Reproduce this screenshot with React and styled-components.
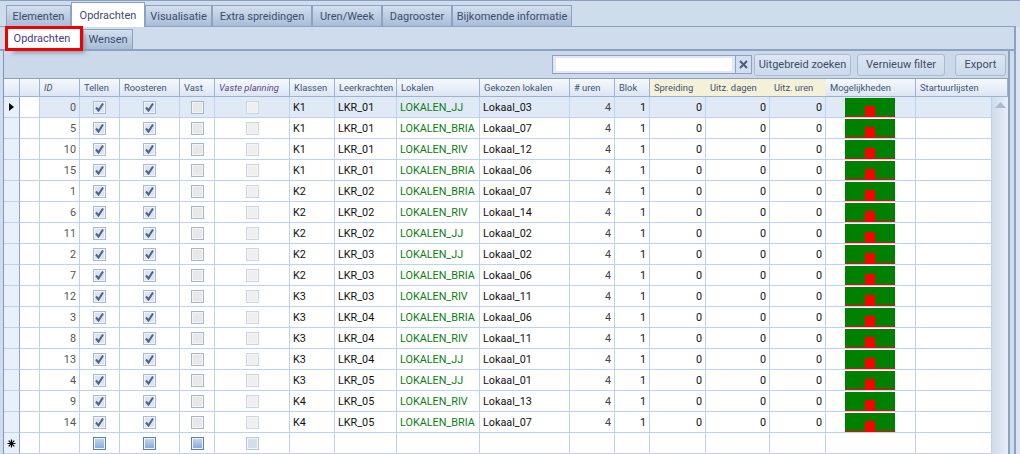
import React from "react";
import styled, { createGlobalStyle } from "styled-components";

const BODY_COLS = "16px 20px 40px 40px 60px 35px 75px 45px 62px 83px 90px 45px 35px 56px 64px 56px 90px 76px";
const HEAD_COLS = "16px 20px 40px 40px 60px 35px 75px 45px 62px 83px 90px 45px 35px 56px 64px 56px 90px 92px";

const GlobalStyle = createGlobalStyle`
  html, body { margin: 0; padding: 0; background: #cfdcec; }
  body { font-family: Roboto, "Liberation Sans", Arial, sans-serif; font-size: 11px; }
`;

const Page = styled.div`
  width: 1020px;
  height: 454px;
  overflow: hidden;
  background: #cfdcec;
  border-top: 1px solid #8aa0c0;
  box-sizing: border-box;
  display: flex;
  flex-direction: column;
`;

const MainTabs = styled.div`
  display: flex;
  align-items: flex-end;
  height: 25px;
  padding-left: 6px;
  flex: none;
  border-bottom: 1px solid #8ba2c4;
  margin-right: 4px;
`;

const MainTab = styled.div`
  box-sizing: border-box;
  width: ${(p) => p.$w}px;
  height: ${(p) => (p.$active ? 25 : 21)}px;
  display: flex;
  align-items: center;
  justify-content: center;
  color: #3d4d6e;
  font-size: 11px;
  border: 1px solid #8ba2c4;
  border-bottom: none;
  background: ${(p) => (p.$active ? "#fff" : "linear-gradient(#d3dfee, #a8bdd8)")};
  ${(p) => p.$active && "margin-bottom: -1px;"}
`;

const TabPanel = styled.div`
  flex: 1;
  min-height: 0;
  display: flex;
  flex-direction: column;
  margin-right: 4px;
  border-right: 2px solid #8ba2c4;
  background: #cfdcec;
  box-shadow: 4px 0 0 #dbe5f2;
`;

const SubTabs = styled.div`
  display: flex;
  align-items: flex-end;
  height: 22px;
  padding-left: ${(p) => p.$inset}px;
  flex: none;
  border-bottom: 2px solid #8ba2c4;
`;

const SubTab = styled.div`
  box-sizing: border-box;
  height: 20px;
  width: ${(p) => p.$w}px;
  display: flex;
  align-items: center;
  justify-content: center;
  font-size: 11px;
  color: #3d4d6e;
  background: linear-gradient(#d3dfee, #a8bdd8);
  border: 1px solid #8ba2c4;
  border-bottom: none;
  ${(p) =>
    p.$marked &&
    `height: 19px;
     margin-bottom: 1px;
     padding-right: 4px;
     background: #fff;
     outline: 3px solid #f00000;
     box-shadow: 5px 5px 4px #8a9ab0;
     position: relative;
     z-index: 2;
     margin-right: 3px;
     border: none;
     color: #4a3a86;`}
`;

const GridFrame = styled.div`
  flex: 1;
  min-height: 0;
  margin-left: 3px;
  margin-right: 4px;
  display: flex;
  flex-direction: column;
  border-left: 1px solid #7f97bb;
  border-right: 2px solid #8ba2c4;
`;

const Toolbar = styled.div`
  flex: none;
  height: 27px;
  display: flex;
  align-items: center;
  background: #ccd9ea;
`;

const SearchBox = styled.div`
  box-sizing: border-box;
  margin-left: 548px;
  width: 184px;
  height: 19px;
  border: 1px solid #8ba2c4;
  background: #dfe8f4;
  padding: 2px 3px;
`;

const SearchInput = styled.div`
  background: #fff;
  height: 100%;
`;

const ClearButton = styled.div`
  box-sizing: border-box;
  width: 16px;
  height: 19px;
  border: 1px solid #8ba2c4;
  border-left: none;
  display: flex;
  align-items: center;
  justify-content: center;
  background: #d3dfee;
  margin-right: 2px;
`;

const ToolButton = styled.div`
  box-sizing: border-box;
  width: ${(p) => p.$w}px;
  height: 22px;
  margin-right: ${(p) => p.$gap}px;
  border: 1px solid #a9bbd4;
  border-radius: 3px;
  background: linear-gradient(#dde6f2, #cddaeb);
  color: #3d4d6e;
  font-size: 11px;
  white-space: nowrap;
  display: flex;
  align-items: center;
  justify-content: center;
`;

const HeaderRow = styled.div`
  flex: none;
  height: 19px;
  display: grid;
  grid-template-columns: ${HEAD_COLS};
  border-top: 1px solid #8ba2c4;
  border-bottom: 1px solid #9db2d0;
  box-sizing: border-box;
`;

const HeaderCell = styled.div`
  box-sizing: border-box;
  padding-left: 4px;
  display: flex;
  align-items: center;
  font-size: 9.4px;
  white-space: nowrap;
  overflow: hidden;
  color: ${(p) => (p.$purple ? "#5b4a86" : "#3f5273")};
  font-style: ${(p) => (p.$italic ? "italic" : "normal")};
  border-right: ${(p) => (p.$tinted ? "none" : "1px solid #9db2d0")};
  background: ${(p) => (p.$tinted ? "#f5f1d8" : "linear-gradient(#f6f9fd, #dbe6f4)")};
`;

const GridBody = styled.div`
  flex: 1;
  min-height: 0;
  display: flex;
`;

const Rows = styled.div`
  flex: none;
  width: 988px;
`;

const Row = styled.div`
  height: 21px;
  box-sizing: border-box;
  display: grid;
  grid-template-columns: ${BODY_COLS};
  background: ${(p) => (p.$current ? "#e0eaf6" : "#fff")};
`;

const Cell = styled.div`
  box-sizing: border-box;
  border-right: 1px solid #bdd2ee;
  border-bottom: 1px solid #bdd2ee;
  display: flex;
  align-items: center;
  padding: 0 3px;
  font-size: 10.8px;
  white-space: nowrap;
  overflow: hidden;
  color: ${(p) => p.$color || "#111"};
  justify-content: ${(p) => (p.$align === "right" ? "flex-end" : p.$align === "center" ? "center" : "flex-start")};
`;

const IndicatorCell = styled(Cell)`
  background: #e7f0fb;
  padding: 0;
  justify-content: center;
  border-right-color: #8ba2c4;
`;

const WhiteCell = styled(Cell)`
  background: #fff;
`;

const PlotCell = styled(Cell)`
  padding: 1px 0 0 19px;
  align-items: flex-start;
`;

const boxBorder = { on: "#a9bbd4", off: "#a9b6c8", faint: "#ccd5e1", blank: "#5b80b0", blankFaint: "#b9c6d8" };
const boxFill = {
  on: "#dfe4ec",
  off: "#e8e8e8",
  faint: "#efefef",
  blank: "linear-gradient(#c5d8ee, #83aad8)",
  blankFaint: "#d3deec",
};

const Box = styled.div`
  box-sizing: border-box;
  width: 13px;
  height: 13px;
  border: 1px solid ${(p) => boxBorder[p.$kind]};
  background: ${(p) => boxFill[p.$kind]};
  box-shadow: inset 0 0 0 1px #f1f4f8;
  display: flex;
  align-items: center;
  justify-content: center;
`;

const ScrollTrack = styled.div`
  flex: none;
  width: 16px;
  background: linear-gradient(90deg, #cfdcec, #e6eef8);
  display: flex;
  justify-content: center;
  padding-top: 5px;
  box-sizing: border-box;
`;

const CheckBox = ({ kind = "on" }) => (
  <Box $kind={kind}>
    {kind === "on" && (
      <svg width="11" height="11" viewBox="0 0 11 11">
        <path d="M2 5.5 L4.5 8.5 L9 1.5" fill="none" stroke="#47648f" strokeWidth="2" />
      </svg>
    )}
  </Box>
);

const Plot = () => (
  <svg width="50" height="19" viewBox="0 0 50 19" shapeRendering="crispEdges">
    <rect width="50" height="19" fill="#008000" />
    <rect y="18" width="50" height="1" fill="#ff0000" />
    <rect x="20" y="8" width="10" height="10" fill="#ff0000" />
  </svg>
);

const mainTabs = [
  ["Elementen", 65],
  ["Opdrachten", 74, true],
  ["Visualisatie", 67],
  ["Extra spreidingen", 100],
  ["Uren/Week", 70],
  ["Dagrooster", 70],
  ["Bijkomende informatie", 120],
];

const headers = [
  ["", {}],
  ["", {}],
  ["ID", { $italic: true }],
  ["Tellen", {}],
  ["Roosteren", {}],
  ["Vast", {}],
  ["Vaste planning", { $italic: true, $purple: true }],
  ["Klassen", {}],
  ["Leerkrachten", {}],
  ["Lokalen", {}],
  ["Gekozen lokalen", {}],
  ["# uren", {}],
  ["Blok", {}],
  ["Spreiding", { $tinted: true }],
  ["Uitz. dagen", { $tinted: true }],
  ["Uitz. uren", { $tinted: true }],
  ["Mogelijkheden", {}],
  ["Startuurlijsten", {}],
];

const rows = [
  [0, "K1", "LKR_01", "JJ", "03"],
  [5, "K1", "LKR_01", "BRIA", "07"],
  [10, "K1", "LKR_01", "RIV", "12"],
  [15, "K1", "LKR_01", "BRIA", "06"],
  [1, "K2", "LKR_02", "BRIA", "07"],
  [6, "K2", "LKR_02", "RIV", "14"],
  [11, "K2", "LKR_02", "JJ", "02"],
  [2, "K2", "LKR_03", "JJ", "02"],
  [7, "K2", "LKR_03", "BRIA", "06"],
  [12, "K3", "LKR_03", "RIV", "11"],
  [3, "K3", "LKR_04", "BRIA", "06"],
  [8, "K3", "LKR_04", "RIV", "11"],
  [13, "K3", "LKR_04", "JJ", "01"],
  [4, "K3", "LKR_05", "JJ", "01"],
  [9, "K4", "LKR_05", "RIV", "13"],
  [14, "K4", "LKR_05", "BRIA", "07"],
];

const App = () => (
  <>
    <GlobalStyle />
    <Page>
      <MainTabs>
        {mainTabs.map(([label, w, active]) => (
          <MainTab key={label} $w={w} $active={active}>
            {label}
          </MainTab>
        ))}
      </MainTabs>
      <TabPanel>
        <SubTabs $inset={8}>
          <SubTab $w={72} $marked>
            Opdrachten
          </SubTab>
          <SubTab $w={50}>Wensen</SubTab>
        </SubTabs>
        <GridFrame>
          <Toolbar>
            <SearchBox>
              <SearchInput />
            </SearchBox>
            <ClearButton>
              <svg width="9" height="9" viewBox="0 0 9 9">
                <path d="M1 1 L8 8 M8 1 L1 8" stroke="#4a5d7e" strokeWidth="2" />
              </svg>
            </ClearButton>
            <ToolButton $w={97} $gap={6}>
              Uitgebreid zoeken
            </ToolButton>
            <ToolButton $w={88} $gap={10}>
              Vernieuw filter
            </ToolButton>
            <ToolButton $w={51} $gap={0}>
              Export
            </ToolButton>
          </Toolbar>
          <HeaderRow>
            {headers.map(([label, props], i) => (
              <HeaderCell key={i} {...props}>
                {label}
              </HeaderCell>
            ))}
          </HeaderRow>
          <GridBody>
            <Rows>
              {rows.map(([id, klas, lkr, lok, gekozen], i) => (
                <Row key={id} $current={i === 0}>
                  <IndicatorCell>
                    {i === 0 && (
                      <svg width="5" height="8" viewBox="0 0 5 8">
                        <path d="M0 0 L5 4 L0 8 Z" fill="#000" />
                      </svg>
                    )}
                  </IndicatorCell>
                  <WhiteCell />
                  <Cell $align="right" $color="#555">{id}</Cell>
                  <Cell $align="center"><CheckBox /></Cell>
                  <Cell $align="center"><CheckBox /></Cell>
                  <Cell $align="center"><CheckBox kind="off" /></Cell>
                  <Cell $align="center"><CheckBox kind="faint" /></Cell>
                  <Cell>{klas}</Cell>
                  <Cell>{lkr}</Cell>
                  <Cell $color="#0b7d12">LOKALEN_{lok}</Cell>
                  <Cell>Lokaal_{gekozen}</Cell>
                  <Cell $align="right" $color="#444">4</Cell>
                  <Cell $align="right">1</Cell>
                  <Cell $align="right">0</Cell>
                  <Cell $align="right">0</Cell>
                  <Cell $align="right">0</Cell>
                  <PlotCell><Plot /></PlotCell>
                  <Cell />
                </Row>
              ))}
              <Row>
                <IndicatorCell>
                  <svg width="9" height="9" viewBox="0 0 9 9">
                    <path d="M4.5 0.5 V8.5 M0.5 4.5 H8.5 M1.7 1.7 L7.3 7.3 M7.3 1.7 L1.7 7.3" stroke="#000" strokeWidth="1.2" />
                  </svg>
                </IndicatorCell>
                <WhiteCell />
                <Cell />
                <Cell $align="center"><CheckBox kind="blank" /></Cell>
                <Cell $align="center"><CheckBox kind="blank" /></Cell>
                <Cell $align="center"><CheckBox kind="blank" /></Cell>
                <Cell $align="center"><CheckBox kind="blankFaint" /></Cell>
                {Array.from({ length: 11 }, (_, i) => (
                  <Cell key={i} />
                ))}
              </Row>
            </Rows>
            <ScrollTrack>
              <svg width="11" height="6" viewBox="0 0 11 6">
                <path d="M0 6 L5.5 0 L11 6 Z" fill="#aab9cd" />
              </svg>
            </ScrollTrack>
          </GridBody>
        </GridFrame>
      </TabPanel>
    </Page>
  </>
);

export default App;
